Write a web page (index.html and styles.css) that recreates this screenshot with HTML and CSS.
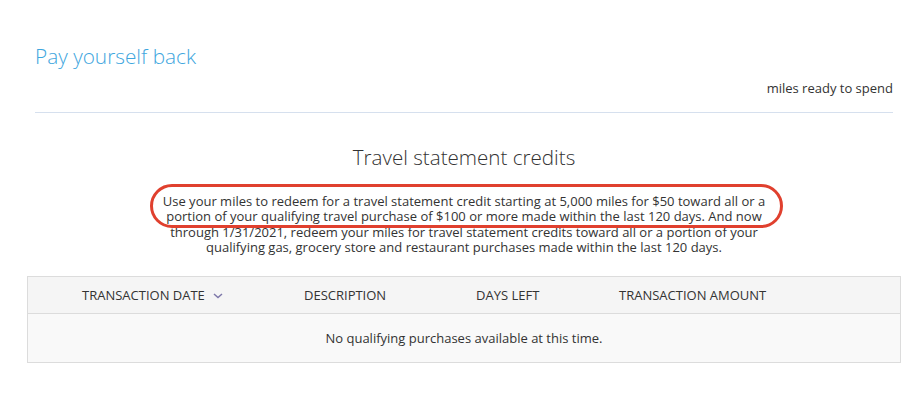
FILE: index.html
```html
<!DOCTYPE html>
<html>
<head>
<meta charset="utf-8">
<link rel="stylesheet" href="styles.css">
</head>
<body>
<div class="page">
  <header class="top">
    <h1 class="title">Pay yourself back</h1>
    <div class="ready">miles ready to spend</div>
  </header>
  <section class="credits">
    <h2 class="sub">Travel statement credits</h2>
    <div class="desc-wrap">
      <p class="desc">Use your miles to redeem for a travel statement credit starting at 5,000 miles for $50 toward all or a portion of your qualifying travel purchase of $100 or more made within the last 120 days. And now through 1/31/2021, redeem your miles for travel statement credits toward all or a portion of your qualifying gas, grocery store and restaurant purchases made within the last 120 days.</p>
      <div class="annot"></div>
    </div>
  </section>
  <div class="table">
    <div class="thead">
      <div class="th c1">TRANSACTION DATE <svg class="chev" width="10" height="6" viewBox="0 0 10 6"><path d="M1 1l4 3.5L9 1" fill="none" stroke="#7d77a9" stroke-width="1.5"/></svg></div>
      <div class="th c2">DESCRIPTION</div>
      <div class="th c3">DAYS LEFT</div>
      <div class="th c4">TRANSACTION AMOUNT</div>
    </div>
    <div class="tbody">No qualifying purchases available at this time.</div>
  </div>
</div>
</body>
</html>
```
FILE: styles.css
```css
html, body { margin: 0; padding: 0; background: #fff; }
body { font-family: "Open Sans", "Liberation Sans", sans-serif; color: #333; }
.page { width: 874px; margin-left: 27px; padding-top: 41px; }
.top { margin: 0 8px; border-bottom: 1px solid #d6e0ee; padding-bottom: 15px; }
.title { margin: 0; font-size: 20.8px; font-weight: 300; color: #3ea6de; line-height: 30px; }
.ready { text-align: right; font-size: 13px; line-height: 18px; margin-top: 8px; color: #333; }
.credits { text-align: center; padding-top: 30px; }
.sub { margin: 0; font-size: 20.6px; font-weight: 300; color: #333; line-height: 28px; }
.desc-wrap { position: relative; width: 620px; margin: 23px auto 0; }
.desc { margin: 0; font-size: 13px; line-height: 15.4px; color: #333; }
.annot { position: absolute; left: -4px; top: -10px; width: 627px; height: 38px; border: 3px solid #e0402e; border-radius: 22px; }
.table { margin-top: 20px; border: 1px solid #dcdcdc; background: #f9f9f9; }
.thead { display: grid; grid-template-columns: 276px 172px 143px 1fr; height: 36px; align-items: center; background: #f5f5f5; border-bottom: 1px solid #dcdcdc; }
.th { font-size: 13px; color: #333; }
.c1 { padding-left: 54px; }
.chev { margin-left: 5px; vertical-align: middle; }
.tbody { height: 48px; line-height: 48px; text-align: center; font-size: 13px; color: #333; }
```
